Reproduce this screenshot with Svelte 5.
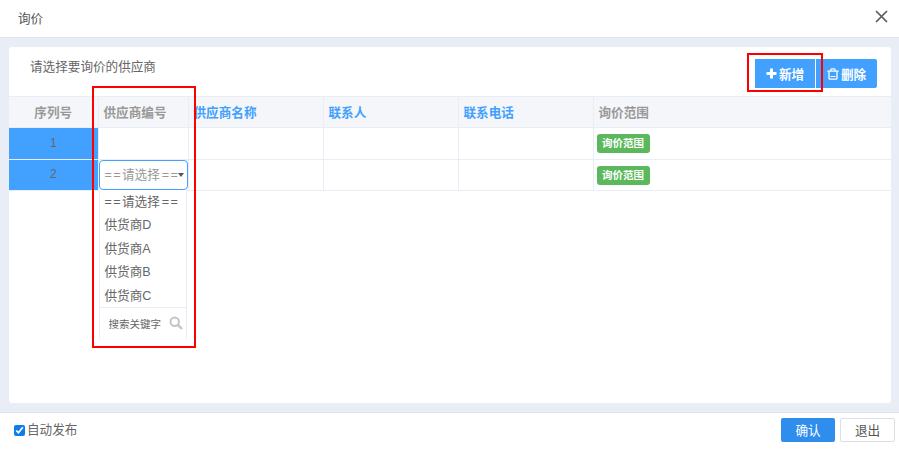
<script>
    const columns = [
        { title: '序列号', width: 89, cls: 'center' },
        { title: '供应商编号', width: 90, cls: '' },
        { title: '供应商名称', width: 135, cls: 'link' },
        { title: '联系人', width: 135, cls: 'link' },
        { title: '联系电话', width: 135, cls: 'link' },
        { title: '询价范围', width: 298, cls: '' }
    ];
    const rows = [1, 2];
    const options = ['供货商D', '供货商A', '供货商B', '供货商C'];
</script>

<div class="dialog">
    <header class="title-bar">
        <span class="title">询价</span>
        <svg class="close" width="13" height="13" viewBox="0 0 13 13">
            <path d="M1 1L12 12M12 1L1 12" stroke="#555a63" stroke-width="1.7" fill="none" />
        </svg>
    </header>

    <main class="body">
        <section class="card">
            <div class="card-top">
                <span class="hint">请选择要询价的供应商</span>
                <div class="actions">
                    <button class="tool">
                        <svg width="11" height="11" viewBox="0 0 11 11">
                            <path d="M4 0.5h3v3.5h3.500v3h-3.500v3.500h-3v-3.500h-3.500v-3h3.500z" fill="#fff" />
                        </svg>
                        新增
                    </button>
                    <button class="tool wide">
                        <svg width="12" height="12" viewBox="0 0 12 12">
                            <path d="M3.800 2.800V2a1.200 1.200 0 0 1 1.200-1.200h2A1.200 1.200 0 0 1 8.200 2v0.800M0.300 3.200h11.400" stroke="#fff" stroke-width="1.300" fill="none" />
                            <path d="M2 3.500v6.700a1 1 0 0 0 1 1h6a1 1 0 0 0 1-1V3.500" stroke="#fff" stroke-width="1.300" fill="none" />
                            <path d="M3.500 8.500h5" stroke="#fff" stroke-width="1" fill="none" />
                        </svg>
                        删除
                    </button>
                </div>
            </div>

            <table>
                <colgroup>
                    {#each columns as col}
                        <col style="width: {col.width}px" />
                    {/each}
                </colgroup>
                <thead>
                    <tr>
                        {#each columns as col}
                            <th class={col.cls}>{col.title}</th>
                        {/each}
                    </tr>
                </thead>
                <tbody>
                    {#each rows as row}
                        <tr class:first-row={row === 1}>
                            <td class="index">{row}</td>
                            <td class="supplier">
                                {#if row === 2}
                                    <div class="select">
                                        <span><span class="eq">==</span>请选择<span class="eq tail">==</span></span>
                                        <i class="caret"></i>
                                    </div>
                                    <div class="dropdown">
                                        <div class="option"><span class="eq">==</span>请选择<span class="eq tail">==</span></div>
                                        {#each options as opt}
                                            <div class="option">{opt}</div>
                                        {/each}
                                        <div class="search">
                                            <span>搜索关键字</span>
                                            <svg width="14" height="14" viewBox="0 0 14 14">
                                                <circle cx="5.700" cy="5.700" r="4.200" stroke="#c4c4c4" stroke-width="2" fill="none" />
                                                <path d="M8.800 8.800L13 13" stroke="#c4c4c4" stroke-width="2.400" />
                                            </svg>
                                        </div>
                                    </div>
                                {/if}
                            </td>
                            <td></td>
                            <td></td>
                            <td></td>
                            <td><span class="tag">询价范围</span></td>
                        </tr>
                    {/each}
                </tbody>
            </table>
        </section>
    </main>

    <footer class="footer">
        <label class="publish">
            <input type="checkbox" checked />
            自动发布
        </label>
        <div class="footer-buttons">
            <button class="confirm">确认</button>
            <button class="quit">退出</button>
        </div>
    </footer>

    <div class="mark mark-add"></div>
    <div class="mark mark-select"></div>
</div>

<style>
    :global(body) {
        margin: 0;
        font-family: "Liberation Sans", "Noto Sans CJK SC", sans-serif;
    }

    .dialog {
        position: relative;
        display: flex;
        flex-direction: column;
        width: 899px;
        height: 450px;
        overflow: hidden;
        background: #fff;
        color: #666;
        font-size: 12.600px;
    }

    .title-bar {
        display: flex;
        align-items: center;
        justify-content: space-between;
        height: 34px;
        padding: 0 11px 3px 18px;
        border-bottom: 1px solid #dfe2e8;
    }

    .title {
        color: #555;
        font-size: 12.600px;
    }

    .close {
        margin-top: -1px;
    }

    .body {
        flex: 1;
        padding: 9px 8px 9px 9px;
        background: #e9edf5;
    }

    .card {
        height: 100%;
        background: #fff;
        border-radius: 3px;
    }

    .card-top {
        display: flex;
        justify-content: space-between;
        height: 49px;
        padding: 12px 14px 0 21px;
        box-sizing: border-box;
    }

    .hint {
        color: #666;
        line-height: 17px;
    }

    .actions {
        display: flex;
        gap: 1px;
    }

    .tool {
        display: flex;
        align-items: center;
        justify-content: center;
        gap: 2px;
        width: 60px;
        height: 29px;
        padding: 0;
        border: 0;
        background: #42a0ff;
        color: #fff;
        font: inherit;
        font-weight: 700;
    }

    .tool.wide {
        width: 61px;
        border-radius: 0 2px 2px 0;
    }

    table {
        width: 882px;
        border-collapse: collapse;
        table-layout: fixed;
    }

    th, td {
        height: 31px;
        padding: 0 5px;
        box-sizing: border-box;
        border: 1px solid #e9edf5;
        text-align: left;
    }

    .first-row td {
        height: 32px;
    }

    th:first-child, td:first-child {
        border-left: 0;
    }

    th:last-child, td:last-child {
        border-right: 0;
    }

    th {
        padding-bottom: 2px;
        background: #f4f6fa;
        color: #999;
        font-weight: 700;
    }

    th.center {
        text-align: center;
    }

    th.link {
        color: #42a0ff;
    }

    td:last-child {
        padding-left: 3px;
    }

    td.index {
        padding-bottom: 2px;
        background: #42a0ff;
        color: #666;
        text-align: center;
        font-size: 12px;
    }

    td.supplier {
        position: relative;
    }

    .eq {
        letter-spacing: 1.400px;
    }

    .eq.tail {
        margin-left: 2px;
    }

    .select {
        position: absolute;
        left: 0;
        top: 0;
        display: flex;
        align-items: center;
        width: 89px;
        height: 30px;
        padding: 0 0 3px 5px;
        box-sizing: border-box;
        border: 1px solid #42a0ff;
        border-radius: 4px;
        background: #fff;
        color: #999;
        white-space: nowrap;
        overflow: hidden;
    }

    .caret {
        position: absolute;
        right: 3px;
        top: 12px;
        border: 3.500px solid transparent;
        border-top: 4px solid #555;
        border-bottom: 0;
    }

    .dropdown {
        position: absolute;
        left: 0;
        top: 30px;
        z-index: 2;
        width: 88px;
        height: 149px;
        padding-top: 1px;
        box-sizing: border-box;
        border: 1px solid #e9edf5;
        border-top: 0;
        background: #fff;
        color: #666;
    }

    .option {
        height: 23.400px;
        padding-left: 5px;
        line-height: 23.400px;
        white-space: nowrap;
    }

    .search {
        display: flex;
        align-items: center;
        justify-content: space-between;
        height: 31px;
        margin-top: -1px;
        padding: 0 3px 0 9px;
        border-top: 1px solid #e9edf5;
        background: #fff;
        font-size: 10.500px;
        color: #666;
    }

    .tag {
        display: inline-block;
        height: 19px;
        padding: 0 5.500px;
        border-radius: 3px;
        background: #5cb85c;
        color: #fff;
        font-size: 10.500px;
        font-weight: 700;
        line-height: 18px;
        vertical-align: middle;
    }

    .footer {
        display: flex;
        align-items: center;
        justify-content: space-between;
        height: 38px;
        padding: 0 4px 3px 14px;
        border-top: 1px solid #dfe2e8;
        box-sizing: border-box;
    }

    .publish {
        display: flex;
        align-items: center;
        gap: 2px;
        color: #666;
        line-height: 15px;
    }

    .publish input {
        width: 11px;
        height: 11px;
        margin: 0;
        accent-color: #0d7dea;
    }

    .footer-buttons {
        display: flex;
        gap: 5px;
    }

    .footer-buttons button {
        width: 54px;
        height: 24px;
        padding: 0 0 2px;
        font: inherit;
        border-radius: 2px;
    }

    .footer-buttons button.quit {
        width: 55px;
    }

    .confirm {
        border: 0;
        background: #2e8ded;
        color: #fff;
    }

    .quit {
        border: 1px solid #dcdfe6;
        background: #fff;
        color: #555;
    }

    .mark {
        position: absolute;
        box-sizing: border-box;
        border: 2px solid #f00;
        z-index: 3;
        pointer-events: none;
    }

    .mark-add {
        left: 747px;
        top: 53px;
        width: 76px;
        height: 39px;
    }

    .mark-select {
        left: 92px;
        top: 86px;
        width: 104px;
        height: 262px;
    }
</style>
